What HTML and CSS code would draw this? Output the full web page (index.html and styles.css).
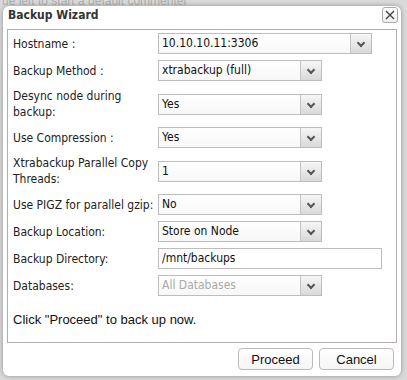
FILE: index.html
```html
<!DOCTYPE html>
<html lang="en">
<head>
    <meta charset="UTF-8">
    <title>Backup Wizard</title>
    <link rel="stylesheet" href="styles.css">
</head>
<body>
    <div class="backdrop-text">ue left to start a default commenter</div>
    <div class="dialog">
        <div class="dialog-header">
            <span class="dialog-title">Backup Wizard</span>
            <span class="close-btn">
                <svg width="10" height="10" viewBox="0 0 10 10"><path d="M1 1 L9 9 M9 1 L1 9" stroke="#444" stroke-width="1.4"/></svg>
            </span>
        </div>
        <div class="dialog-body">
            <div class="form-row">
                <label>Hostname :</label>
                <div class="select wide"><span class="value">10.10.10.11:3306</span><span class="arrow"></span></div>
            </div>
            <div class="form-row">
                <label>Backup Method :</label>
                <div class="select"><span class="value">xtrabackup (full)</span><span class="arrow"></span></div>
            </div>
            <div class="form-row">
                <label>Desync node during backup:</label>
                <div class="select"><span class="value">Yes</span><span class="arrow"></span></div>
            </div>
            <div class="form-row">
                <label>Use Compression :</label>
                <div class="select"><span class="value">Yes</span><span class="arrow"></span></div>
            </div>
            <div class="form-row">
                <label>Xtrabackup Parallel Copy Threads:</label>
                <div class="select"><span class="value">1</span><span class="arrow"></span></div>
            </div>
            <div class="form-row">
                <label>Use PIGZ for parallel gzip:</label>
                <div class="select"><span class="value">No</span><span class="arrow"></span></div>
            </div>
            <div class="form-row">
                <label>Backup Location:</label>
                <div class="select"><span class="value">Store on Node</span><span class="arrow"></span></div>
            </div>
            <div class="form-row">
                <label>Backup Directory:</label>
                <div class="text-input">/mnt/backups</div>
            </div>
            <div class="form-row">
                <label>Databases:</label>
                <div class="select disabled"><span class="value">All Databases</span><span class="arrow"></span></div>
            </div>
            <p class="note">Click "Proceed" to back up now.</p>
        </div>
        <div class="dialog-footer">
            <button>Proceed</button>
            <button>Cancel</button>
        </div>
    </div>
</body>
</html>
```

FILE: styles.css
```css
body {
    margin: 0;
    height: 380px;
    background-color: #dadada;
    font-family: "DejaVu Sans Condensed", "DejaVu Sans", sans-serif;
    font-size: 12px;
    color: #222;
    position: relative;
    overflow: hidden;
}
.backdrop-text {
    position: absolute;
    left: 2px;
    top: -5px;
    font-family: "Liberation Sans", Arial, sans-serif;
    font-size: 12px;
    line-height: 12px;
    color: #b0b0b0;
}
.dialog {
    position: absolute;
    left: 3px;
    top: 6px;
    width: 398px;
    height: 370px;
    background-color: #fff;
    border-radius: 6px;
    box-shadow: 0 0 5px rgba(0, 0, 0, 0.35);
    display: flex;
    flex-direction: column;
}
.dialog-header {
    height: 18px;
    display: flex;
    align-items: center;
    justify-content: space-between;
    padding: 0 3px 5px 5px;
}
.dialog-title {
    font-weight: bold;
    font-size: 12px;
    color: #333;
}
.close-btn {
    width: 14px;
    height: 14px;
    border: 1px solid #a9a9a9;
    border-radius: 3px;
    display: flex;
    align-items: center;
    justify-content: center;
    background: linear-gradient(#fff, #eee);
}
.dialog-body {
    margin: 0 4px;
    border: 1px solid #b3adad;
    padding: 3px 5px 14px 5px;
    display: flex;
    flex-direction: column;
    gap: 6px;
}
.form-row {
    display: flex;
    align-items: center;
}
.form-row label {
    width: 145px;
    line-height: 16px;
    padding: 1px 0;
    flex-shrink: 0;
}
.select {
    width: 162px;
    height: 19px;
    border: 1px solid #bdbdbd;
    display: flex;
    background: linear-gradient(#fff, #f7f7f7);
    color: #111;
}
.select.wide {
    width: 212px;
}
.select .value {
    flex: 1;
    padding-left: 3px;
    line-height: 19px;
}
.select .arrow {
    width: 20px;
    border-left: 1px solid #c4c4c4;
    background: linear-gradient(#f6f6f6, #d9d9d9);
    position: relative;
}
.select .arrow::after {
    content: "";
    position: absolute;
    left: 7px;
    top: 6px;
    width: 4px;
    height: 4px;
    border-right: 2px solid #555;
    border-bottom: 2px solid #555;
    transform: rotate(45deg);
}
.select.disabled .value {
    color: #aaa;
}
.text-input {
    width: 219px;
    height: 19px;
    line-height: 19px;
    border: 1px solid #bdbdbd;
    padding-left: 3px;
    color: #111;
}
.note {
    margin: 10px 0 0 0;
    font-family: "Liberation Sans", Arial, sans-serif;
    font-size: 13px;
    line-height: 16px;
    color: #111;
}
.dialog-footer {
    display: flex;
    justify-content: flex-end;
    gap: 6px;
    padding: 5px 7px 0 0;
}
button {
    width: 75px;
    height: 22px;
    border: 1px solid #bbb;
    border-radius: 4px;
    background: linear-gradient(#fff, #f5f5f5);
    font-family: "Liberation Sans", Arial, sans-serif;
    font-size: 13px;
    color: #111;
    padding: 0;
}
```
